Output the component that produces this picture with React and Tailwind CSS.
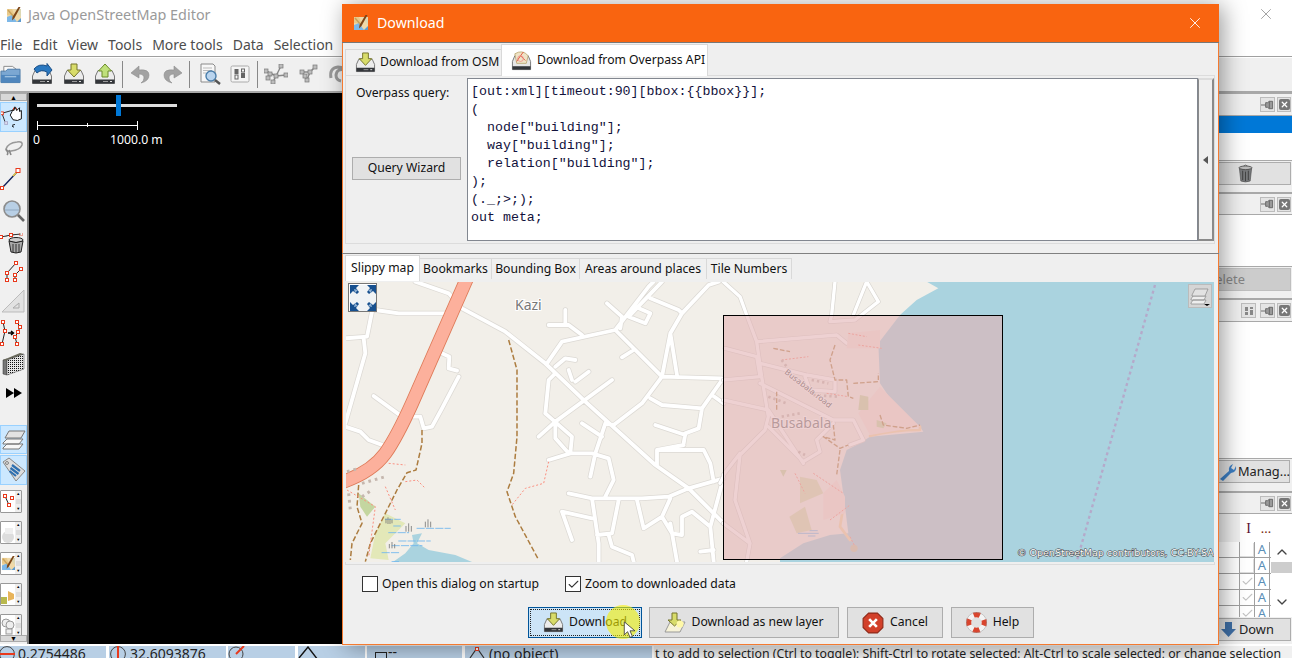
import { X, ChevronUp, ChevronDown, Check } from 'lucide-react'

const sans = "font-['Noto_Sans',sans-serif]"

function N({ x, y, o = 1 }) {
  return <rect x={x - 1.5} y={y - 1.5} width="3" height="3" fill="#fff" stroke="#e8391c" strokeWidth="1" opacity={o} />
}

function Logo({ className }) {
  return (
    <svg viewBox="0 0 16 16" className={className}>
      <rect x="1" y="2" width="14" height="13" fill="#f0d9a8" />
      <path d="M1 2 H6 L9 9 L1 8Z" fill="#e9c98a" />
      <path d="M1 10 L6 8 L11 15 H1Z" fill="#7db8e8" />
      <path d="M9 2 H15 V10Z" fill="#dcd8b4" />
      <path d="M11 15 L15 11 V15Z" fill="#5d9bd0" />
      <path d="M2 3 L8 10" stroke="#c8a25c" strokeWidth="1.5" />
      <path d="M14.5 0 L8.5 11 L6 13.5 L6.5 10 L12.5 0Z" fill="#7d4517" />
    </svg>
  )
}

function Drive({ arrow = 'down', className = 'w-5 h-5', color = '#d8dc6a' }) {
  return (
    <svg viewBox="0 0 22 22" className={className}>
      <path d="M1.5 13 L4 7.5 H18 L20.5 13 V20.5 H1.5Z" fill="#ececec" stroke="#777" />
      <rect x="1.5" y="16.5" width="19" height="4" fill="#33363a" />
      <rect x="9" y="18" width="5" height="1" fill="#999" />
      <rect x="16" y="18" width="2" height="1" fill="#ddd" />
      {arrow === 'down' && <path d="M8 1 H14 V7 H17.5 L11 14 L4.5 7 H8Z" fill={color} stroke="#75752a" />}
      {arrow === 'up' && <path d="M8 14 H14 V8 H17.5 L11 1 L4.5 8 H8Z" fill="#bfe07a" stroke="#6b8a2a" />}
      {arrow === 'blue' && <path d="M3 6 Q8 0 16 3 V0.5 L21 7 L16 13 V9 Q10 6 6 10Z" fill="#2a78c0" stroke="#1c4f86" />}
    </svg>
  )
}

function OverpassDrive() {
  return (
    <svg viewBox="0 0 22 22" className="w-[21px] h-[21px]">
      <path d="M1.5 12 L4 6 H18 L20.5 12 V20.5 H1.5Z" fill="#e6e6e6" stroke="#777" />
      <rect x="1.5" y="17" width="19" height="3.5" fill="#33363a" />
      <path d="M4 4 Q12 -1 18 6 L16 14 H6Z" fill="#efe3c6" stroke="#b7a36a" strokeWidth="0.8" />
      <path d="M6 12 L10 6 L15 11 M10 6 L13 2" stroke="#e4573c" strokeWidth="1" fill="none" />
      <circle cx="10" cy="9" r="3" fill="none" stroke="#e88" strokeWidth="0.8" />
    </svg>
  )
}

function Folder() {
  return (
    <svg viewBox="0 0 22 22" className="w-[21px] h-[22px] shrink-0">
      <path d="M4 3 H13 L17 6 V10 H4Z" fill="#fafafa" stroke="#888" />
      <path d="M1 8 H6 L8 6 H21 V20 H1Z" fill="#7ba7d2" stroke="#4d7aa6" />
      <path d="M1 12 H21 V20 H1Z" fill="#4f86bd" />
      <rect x="5" y="13" width="12" height="1.5" fill="#9cc0e0" />
    </svg>
  )
}

function Undo({ flip, className = '' }) {
  return (
    <svg viewBox="0 0 20 20" className={`w-5 h-5 shrink-0 ${flip ? '-scale-x-100' : ''} ${className}`}>
      <path d="M9 2 L1 9 L9 14 V10 Q14 10 14 14 Q14 17 11 19 Q19 17 19 11 Q19 5 9 6Z" fill="#a2a2a2" stroke="#8d8d8d" strokeWidth="0.6" />
    </svg>
  )
}

function Preview() {
  return (
    <svg viewBox="0 0 22 22" className="w-[22px] h-[22px] shrink-0 ml-[9px]">
      <path d="M2 1 H14 L16 3 V19 H2Z" fill="#f7f7f7" stroke="#8a8a8a" />
      <path d="M4 5 H13 M4 7.5 H13 M4 10 H7" stroke="#bbb" />
      <circle cx="12" cy="13" r="5" fill="#b9d4ee" stroke="#4b7eaa" strokeWidth="1.4" />
      <path d="M16 17 L21 21" stroke="#555" strokeWidth="2.4" />
    </svg>
  )
}

function Prefs() {
  return (
    <svg viewBox="0 0 20 20" className="w-5 h-5 shrink-0 ml-[9px]">
      <rect x="1" y="2" width="18" height="16" rx="1.5" fill="#f5f5f5" stroke="#aaa" />
      <rect x="4.5" y="5" width="4" height="5" fill="#666" />
      <rect x="5" y="11" width="3" height="4" fill="none" stroke="#666" />
      <rect x="11.5" y="5" width="3" height="3" fill="none" stroke="#666" />
      <rect x="11" y="9" width="4" height="5" fill="#666" />
    </svg>
  )
}

function GrayNodes({ variant, className }) {
  const nodes =
    variant === 1
      ? [[2, 7], [6, 10], [4, 14], [17, 2], [22, 11], [12, 12], [9, 18]]
      : [[4, 8], [12, 8], [17, 3], [9, 16], [7, 12]]
  return (
    <svg viewBox="0 0 24 20" className={`w-6 h-5 shrink-0 ${className}`}>
      {variant === 1 ? (
        <path d="M2 7 L12 12 L17 2 M5 9 L4 14 M12 12 L9 18 M12 12 L22 11" stroke="#888" strokeWidth="1.4" fill="none" />
      ) : (
        <path d="M4 8 L12 8 L17 3 M12 8 L9 16" stroke="#888" strokeWidth="1.4" fill="none" />
      )}
      {nodes.map(([x, y]) => (
        <rect key={`${x}-${y}`} x={x - 2} y={y - 2} width="4" height="4" fill="#bcbcbc" stroke="#777" strokeWidth="0.7" />
      ))}
    </svg>
  )
}

function Pin() {
  return (
    <div className="w-[15px] h-[15px] border border-[#bcbcbc] bg-[#e4e4e4] flex items-center justify-center">
      <svg viewBox="0 0 14 10" className="w-[14px] h-[10px]">
        <path d="M0 5 H5 M5 2.5 H7 L9 1 V9 L7 7.5 H5Z M9 1 H12.5 V9 H9" stroke="#666" fill="#9a9a9a" strokeWidth="1" />
      </svg>
    </div>
  )
}

function CloseBox() {
  return (
    <div className="w-[14px] h-[15px] border border-[#bcbcbc] bg-[#e4e4e4] flex items-center justify-center">
      <div className="w-[11px] h-[11px] bg-[#777] rounded-[2px] flex items-center justify-center">
        <X size={9} strokeWidth={3.4} color="#fff" />
      </div>
    </div>
  )
}

function PanelHeader({ h, extra }) {
  return (
    <div className={`${h} flex items-center justify-end gap-[2px] pr-[1px] bg-[#f0f0f0] border-y border-[#a9a9a9]`}>
      {extra && (
        <div className="w-[15px] h-[15px] border border-[#bcbcbc] bg-[#e4e4e4] mr-[2px] flex items-center justify-center">
          <svg viewBox="0 0 10 10" className="w-[10px] h-[10px]">
            <path d="M1 1 H4 V5 H1Z M6 1 H9 V3 H6Z M1 6 H4 V9 H1Z M6 4 H9 V9 H6Z" fill="#888" />
          </svg>
        </div>
      )}
      <Pin />
      <CloseBox />
    </div>
  )
}

function Trash() {
  return (
    <svg viewBox="0 0 16 20" className="w-[15px] h-[19px]">
      <path d="M6 2 Q8 0 10 2" stroke="#666" fill="none" />
      <ellipse cx="8" cy="4" rx="7" ry="2" fill="#bbb" stroke="#555" />
      <path d="M1.5 5 L3 18 Q8 20 13 18 L14.5 5 Q8 7 1.5 5Z" fill="#77797b" stroke="#444" strokeWidth="0.6" />
      <path d="M5 7 V17 M8 8 V18 M11 7 V17" stroke="#3f3f3f" />
    </svg>
  )
}

function LeftTool({ h, selected, children }) {
  return (
    <div className={`${h} w-[27px] flex items-center justify-center shrink-0 ${selected ? 'bg-[#cce8ff] border border-[#99d1ff]' : ''}`}>
      {children}
    </div>
  )
}

function ToggleIcon({ children, className }) {
  return (
    <div className={`h-[23px] w-[22px] shrink-0 bg-white border border-[#999] rounded-[1px] flex overflow-hidden ${className}`}>
      <div className="w-[15px] h-full overflow-hidden">{children}</div>
      <div className="w-[6px] h-full bg-[#eee] flex flex-col items-center justify-between text-[4px] leading-[6px] text-black">
        <span>▲</span>
        <span className="w-[5px] h-[5px] bg-[#ddd]" />
        <span>▼</span>
      </div>
    </div>
  )
}

function LeftToolbar() {
  return (
    <div className="w-[29px] shrink-0 bg-[#f0f0f0] border-r-2 border-[#808080] flex flex-col">
      <div className="h-[8px] w-[27px] bg-[#d8d8d8] border border-[#aaa] flex items-center justify-center text-[7px] leading-none text-black">▲</div>
      <LeftTool h="h-[30px] mt-[1px]" selected>
        <svg viewBox="0 0 27 30" className="w-[27px] h-[30px]">
          <path d="M1 11 L15 7 M1 11 L5 22" stroke="#222" />
          <N x={1} y={11} />
          <N x={15} y={7} />
          <rect x="4" y="20" width="3" height="3" fill="#dde" stroke="#aac" />
          <path d="M12 9 Q12 6 14 8 L15 4 L17 8 L20 5 V9 L22 8 V17 Q18 20 13 18 L10 13 Z" fill="#fff" stroke="#000" />
          <path d="M12 24 L15 23 M12 25 L14 26" stroke="#000" />
        </svg>
      </LeftTool>
      <LeftTool h="h-[18px] mt-[8px]">
        <svg viewBox="0 0 22 18" className="w-[22px] h-[18px]">
          <path d="M3 9 Q5 3 14 2 Q20 1 19 5 Q17 10 8 11 Q3 12 3 9Z" fill="none" stroke="#999" strokeWidth="1.6" />
          <path d="M3 9 Q6 13 4 15 M6 10 L8 15" stroke="#888" strokeWidth="1.6" fill="none" />
        </svg>
      </LeftTool>
      <LeftTool h="h-[24px] mt-[9px]">
        <svg viewBox="0 0 27 24" className="w-[27px] h-[24px]">
          <path d="M2 21 L18 4" stroke="#10205a" strokeWidth="1.4" />
          <path d="M13 9 L18 4" stroke="#e8c840" strokeWidth="1.4" />
          <rect x="16" y="1.5" width="4" height="4" fill="#fff" stroke="#e8391c" />
          <N x={2} y={21} />
        </svg>
      </LeftTool>
      <LeftTool h="h-[24px] mt-[8px]">
        <svg viewBox="0 0 24 24" className="w-6 h-6">
          <circle cx="10" cy="10" r="8" fill="#b8cfe5" stroke="#8c8c8c" strokeWidth="1.6" />
          <path d="M3 11 H17" stroke="#90a8c0" />
          <path d="M16 16 L22 22" stroke="#666" strokeWidth="2.6" />
        </svg>
      </LeftTool>
      <LeftTool h="h-[22px] mt-[10px]">
        <svg viewBox="0 0 27 22" className="w-[27px] h-[22px]">
          <path d="M1 4 L11 2 L21 1" stroke="#333" />
          <N x={1} y={4} />
          <N x={11} y={2} />
          <N x={21} y={1} o={0.4} />
          <ellipse cx="16" cy="7" rx="7" ry="2.5" fill="#ccc" stroke="#222" />
          <path d="M9 8 L11 19 Q16 21 21 19 L23 8 Q16 11 9 8Z" fill="#a9a9a9" stroke="#222" />
          <path d="M13 11 V19 M16 11 V20 M19 11 V19" stroke="#333" />
        </svg>
      </LeftTool>
      <LeftTool h="h-[22px] mt-[5px]">
        <svg viewBox="0 0 24 22" className="w-6 h-[22px]">
          <path d="M5 20 V13 L14 3 M13 20 V15 L19 9" stroke="#222" fill="none" />
          <N x={5} y={13} />
          <N x={5} y={20} />
          <N x={14} y={3} />
          <N x={13} y={15} />
          <N x={13} y={20} />
          <N x={19} y={9} />
        </svg>
      </LeftTool>
      <LeftTool h="h-[24px] mt-[7px]">
        <svg viewBox="0 0 24 24" className="w-6 h-6">
          <path d="M22 1 V23 H0Z" fill="#e2e2e2" stroke="#bbb" />
          <path d="M17 14 V19 H11Z" fill="none" stroke="#aaa" />
        </svg>
      </LeftTool>
      <LeftTool h="h-[26px] mt-[7px]">
        <svg viewBox="0 0 27 26" className="w-[27px] h-[26px]">
          <path d="M3 2 L5 11 L2 24 M17 2 L20 7 L18 12 L15 17 L17 24" stroke="#222" fill="none" />
          {[[3, 2], [5, 11], [2, 24], [17, 2], [20, 7], [18, 12], [15, 17], [17, 24]].map(([x, y]) => (
            <N key={`${x}-${y}`} x={x} y={y} />
          ))}
          <path d="M8 13 H13 M11 11 L13.5 13 L11 15" stroke="#000" strokeWidth="1.4" fill="none" />
        </svg>
      </LeftTool>
      <LeftTool h="h-[24px] mt-[6px]">
        <svg viewBox="0 0 24 24" className="w-6 h-6">
          <defs>
            <pattern id="dots" width="2" height="2" patternUnits="userSpaceOnUse">
              <rect width="1" height="1" fill="#111" />
            </pattern>
          </defs>
          <path d="M1 8 L5 7 L5 23 L1 22Z" fill="#777" stroke="#333" strokeWidth="0.5" />
          <path d="M1 8 L18 1 L22 2 L5 9Z" fill="#6a6a5c" />
          <path d="M5 8 L22 2 V17 L5 23Z" fill="#e6e6e6" stroke="#444" strokeWidth="0.5" />
          <path d="M5 8 L22 2 V17 L5 23Z" fill="url(#dots)" />
        </svg>
      </LeftTool>
      <div className="h-[12px] mt-[11px] w-[27px] shrink-0 flex items-center justify-center">
        <svg viewBox="0 0 16 10" className="w-4 h-[10px]"><path d="M0 0 L8 5 L0 10Z M8 0 L16 5 L8 10Z" fill="#000" /></svg>
      </div>
      <LeftTool h="h-[29px] mt-[26px]" selected>
        <svg viewBox="0 0 24 24" className="w-6 h-6">
          <path d="M1 20 L5 16 H21 L17 21 H1Z M1 15 L5 11 H21 L17 16 H1Z" fill="#f7f7f7" stroke="#777" />
          <path d="M3 10 L7 3 H23 L19 10Z" fill="#e2e2e2" stroke="#777" />
        </svg>
      </LeftTool>
      <LeftTool h="h-[30px] mt-[1px]" selected>
        <svg viewBox="0 0 24 26" className="w-6 h-[26px]">
          <path d="M1 5 L7 1 L23 14 L14 24Z" fill="#ddd" stroke="#888" />
          <circle cx="5" cy="6" r="1.4" fill="#fff" stroke="#777" />
          <path d="M10 8 L18 14 M8.5 11 L16.5 17 M7.5 14 L14 19" stroke="#2d6fb0" strokeWidth="2.2" />
        </svg>
      </LeftTool>
      <ToggleIcon className="mt-[5px]">
        <svg viewBox="0 0 15 21" className="w-[15px] h-[21px]">
          <path d="M4 5 L8 14" stroke="#222" />
          <N x={4} y={5} />
          <N x={11} y={7} />
          <N x={8} y={14} />
        </svg>
      </ToggleIcon>
      <ToggleIcon className="mt-[8px]">
        <svg viewBox="0 0 15 21" className="w-[15px] h-[21px]">
          <circle cx="7" cy="15" r="6" fill="#ddd" />
          <path d="M4 6 H12 V12 H4Z" fill="#eee" />
        </svg>
      </ToggleIcon>
      <ToggleIcon className="mt-[8px]">
        <Logo className="w-[15px] h-[21px]" />
      </ToggleIcon>
      <ToggleIcon className="mt-[8px]">
        <svg viewBox="0 0 15 21" className="w-[15px] h-[21px]">
          <path d="M7 7 L13 10 V15 L7 17Z" fill="#e8b45a" />
          <path d="M0 13 L6 13 L6 20 L0 20Z" fill="#b9b94e" />
        </svg>
      </ToggleIcon>
      <ToggleIcon className="mt-[8px]">
        <svg viewBox="0 0 15 21" className="w-[15px] h-[21px]">
          <circle cx="5" cy="8" r="4" fill="#eee" stroke="#999" />
          <circle cx="9" cy="10" r="4" fill="#eee" stroke="#999" />
          <rect x="5" y="14" width="6" height="5" fill="#eee" stroke="#999" />
        </svg>
      </ToggleIcon>
      <div className="h-[7px] -mt-[2px] w-[27px] shrink-0 bg-[#d8d8d8] border border-[#aaa] flex items-center justify-center text-[7px] leading-none text-black relative">▼</div>
    </div>
  )
}

function RightPanels() {
  const rows = [false, false, true, true, true]
  return (
    <div className={`w-[73px] shrink-0 bg-white flex flex-col text-[12.8px] text-[#222] ${sans}`}>
      <PanelHeader h="h-[23px]" />
      <div className="h-[17px] bg-[#0078d7]" />
      <div className="h-[27px] bg-white" />
      <div className="h-[33px] bg-[#f0f0f0] border-y border-[#a9a9a9] pt-[1px] pr-[1px]">
        <div className="h-[23px] bg-[#e1e1e1] border border-[#adadad] border-l-0 flex items-center pl-[19px]">
          <Trash />
        </div>
      </div>
      <PanelHeader h="h-[22px]" />
      <div className="h-[51px] bg-white" />
      <div className="h-[33px] bg-[#f0f0f0] border-y border-[#a9a9a9] pt-[1px] pr-[1px]">
        <div className="h-[23px] bg-[#cccccc] border border-[#bfbfbf] border-l-0 flex items-center text-[#838383] overflow-hidden">
          <span className="-ml-[13px]">Delete</span>
        </div>
      </div>
      <PanelHeader h="h-[23px]" extra />
      <div className="h-[136px] bg-white" />
      <div className="h-[34px] bg-[#f0f0f0] border-y border-[#a9a9a9] pt-[1px] pr-[2px]">
        <div className="h-[23px] bg-[#e1e1e1] border border-[#adadad] border-l-0 flex items-center gap-[1px]">
          <svg viewBox="0 0 18 18" className="w-[18px] h-[18px] shrink-0">
            <path d="M1 16 L10 8 Q9 3 14 1 L12 5 L15 7 L17 3 Q18 9 12 10 L4 18Z" fill="#3d7fc4" />
          </svg>
          <span>Manag...</span>
        </div>
      </div>
      <PanelHeader h="h-[22px]" />
      <div className="h-[28px] flex bg-white">
        <div className="w-[21px] bg-[#f0f0f0]" />
        <div className="w-[15px] ml-[1px] bg-white flex items-center justify-center font-['Liberation_Serif',serif] text-[#5a1030] text-[14px]">I</div>
        <div className="w-[14px] ml-[3px] flex items-center justify-center text-[#7a2a10] pt-[2px]">...</div>
      </div>
      <div className="h-[75px] flex overflow-hidden">
        <div className="w-[52px] shrink-0">
          {rows.map((checked, i) => (
            <div key={i} className="h-[16px] flex border-b border-[#a0a0a0] overflow-hidden">
              <div className="w-[21px] border-r border-[#a0a0a0] bg-white" />
              <div className="w-[15px] border-r border-[#a0a0a0] bg-white flex items-center justify-center">
                {checked ? <Check size={13} color="#c4c4c4" /> : <div className="w-[14px] h-[14px] bg-white border-b border-r border-[#ddd]" />}
              </div>
              <div className="w-[15px] border-r border-[#a0a0a0] bg-white text-[13px] leading-[15px] text-center text-[#5b8fb8]">A</div>
            </div>
          ))}
        </div>
        <div className="flex-1 flex flex-col items-center">
          <ChevronUp size={16} color="#444" className="mt-[2px]" />
          <div className="w-full h-[11px] mt-[2px] bg-[#cdcdcd]" />
          <ChevronDown size={16} color="#444" className="mt-[21px]" />
        </div>
      </div>
      <div className="h-[27px] bg-[#f0f0f0] pt-[1px] pr-[1px]">
        <div className="h-[23px] bg-[#e1e1e1] border border-[#adadad] border-l-0 flex items-center gap-[3px] pl-[2px]">
          <svg viewBox="0 0 15 16" className="w-[15px] h-[16px] shrink-0">
            <path d="M4 0 H11 V7 H15 L7.5 15 L0 7 H4Z" fill="#3f6fa6" />
          </svg>
          <span>Down</span>
        </div>
      </div>
    </div>
  )
}

function StatusBar() {
  return (
    <div className={`h-[12px] flex gap-[2px] overflow-hidden text-[14px] leading-[16px] text-[#222] ${sans}`}>
      <div className="w-[106px] bg-[#b8cfe5] flex gap-[3px] shrink-0">
        <svg viewBox="0 0 16 16" className="w-4 h-4 shrink-0 -ml-[1px]">
          <circle cx="8" cy="8" r="7.4" fill="none" stroke="#444" />
          <path d="M0 8 H16" stroke="#e8391c" strokeWidth="2" />
        </svg>
        <span>0.2754486</span>
      </div>
      <div className="w-[117px] ml-[1px] bg-[#b8cfe5] flex gap-[3px] shrink-0">
        <svg viewBox="0 0 18 16" className="w-[18px] h-4 shrink-0">
          <circle cx="9" cy="8" r="7.4" fill="none" stroke="#444" />
          <path d="M9 0 V16" stroke="#e8391c" strokeWidth="2" />
        </svg>
        <span>32.6093876</span>
      </div>
      <div className="w-[67px] bg-[#b8cfe5] shrink-0">
        <svg viewBox="0 0 18 16" className="w-[18px] h-4">
          <circle cx="8" cy="8" r="7" fill="none" stroke="#444" />
          <path d="M8 8 L16 0" stroke="#e8391c" strokeWidth="2" />
        </svg>
      </div>
      <div className="w-[67px] ml-[1px] bg-[#b8cfe5] shrink-0">
        <svg viewBox="0 0 24 16" className="w-6 h-4">
          <path d="M1 12 L10 1 L20 14" fill="none" stroke="#111" strokeWidth="1.4" />
        </svg>
      </div>
      <div className="w-[95px] bg-[#b8cfe5] shrink-0 flex items-start pl-[8px] gap-[1px]">
        <div className="w-[12px] h-[8px] mt-[6px] border border-[#222]" />
        <span className="leading-[12px]">--</span>
      </div>
      <div className="w-[187px] ml-[1px] bg-[#b8cfe5] flex gap-[3px] pl-[3px] shrink-0">
        <svg viewBox="0 0 18 16" className="w-[18px] h-4 shrink-0">
          <path d="M2 12 L9 2 L16 12" fill="none" stroke="#333" strokeWidth="1.2" />
          <N x={9} y={3} />
        </svg>
        <span>(no object)</span>
      </div>
      <div className="flex-1 whitespace-nowrap overflow-hidden bg-[#f0f0f0] text-[12.3px] pl-[1px]">
        t to add to selection (Ctrl to toggle); Shift-Ctrl to rotate selected; Alt-Ctrl to scale selected; or change selection
      </div>
    </div>
  )
}

function MapView() {
  const roads =
    'M220 5 L320 40 L360 85 L490 155 L610 250 L730 365 L940 555 L1040 625 L1145 730 M100 90 L170 100 L320 100 M90 95 L75 170 L10 175 M65 175 L70 220 L10 430 M10 440 L55 455 L80 480 L135 500 M95 348 L180 410 L235 410 L245 445 L270 440 L300 385 L350 290 M300 220 L322 230 L320 265 L345 272 M615 250 L660 185 L820 150 L960 290 L1140 295 M820 150 L920 20 L935 5 M960 290 L985 160 L1020 100 L1100 15 L1130 5 M985 160 L1005 285 M960 5 L860 110 L910 130 L925 100 L880 80 M925 55 L1010 90 L1020 100 M620 135 L680 135 L720 165 M670 90 L670 135 M795 70 L840 110 L835 145 M875 210 L840 232 M640 260 L670 235 L700 240 M610 400 L620 300 L640 280 M700 305 L740 275 M680 270 L690 300 M810 300 L640 425 L590 470 M610 400 L690 470 L685 520 L620 540 M640 430 L640 475 L680 520 L750 520 L800 535 L815 600 L790 650 M790 430 L760 520 L745 590 M720 430 L780 470 M960 290 L900 370 L815 435 L790 430 M925 355 L960 375 L1080 385 M1140 300 L1080 385 L1070 445 L1030 460 L1025 490 M1110 345 L1145 370 M940 435 L1030 465 M1025 495 L945 510 L945 555 M945 510 L1085 510 L1105 550 L1115 605 M1040 625 L1145 595 M1040 625 L980 650 L900 655 L750 655 L680 640 M750 655 L770 790 L770 845 M830 660 L810 760 L765 765 M800 765 L810 800 L870 825 L875 845 M885 660 L905 745 L960 710 L985 655 M960 710 L990 760 L1020 765 L1020 710 L1050 695 L1105 740 M985 730 L1005 845 M1140 610 L1105 740 L1115 845 M660 695 L750 715 M660 695 L690 780 M1075 815 L1115 810'
  const eastRoads =
    'M10 5 L60 50 L80 105 L110 185 L125 290 L145 410 L135 450 L60 525 L45 660 L90 790 L80 845 M110 185 L350 165 L380 190 M15 205 L110 230 L120 290 L10 300 M120 250 L260 285 L345 300 L345 335 L270 330 L255 290 M120 310 L260 380 L340 420 L400 420 L430 480 L390 495 M10 360 L145 390 L250 550 M145 440 L250 545 L300 515 L290 480 L340 430 M345 5 L335 105 L330 125 L405 120 L475 65 L440 5 L400 105 M10 590 L0 610 M10 730 L90 790 M60 520 L10 585'

  return (
    <svg viewBox="346 282 868 280" className="w-[868px] h-[280px] block bg-[#f2efe9]">
      <g transform="translate(342 280) scale(0.33333)" fill="none" strokeLinejoin="round" strokeLinecap="round">
        <path d={roads} stroke="#dcd9d4" strokeWidth="16" />
        <path d={roads} stroke="#fff" strokeWidth="11.5" />
        <path d="M130 700 L170 720 L190 730 L130 790 L140 840 L85 835 L100 760Z" fill="#e3e8b8" />
        <path d="M50 640 L100 680 L75 710 L55 680Z" fill="#c4d6a0" />
        <path d="M150 848 L190 820 L215 790 L210 765 L240 760 L225 790 L260 810 L340 825 L395 848Z" fill="#aad3df" />
        <path d="M375 -5 L210 370 Q165 470 130 520 Q90 575 5 605" stroke="#de7a58" strokeWidth="42" strokeLinecap="butt" />
        <path d="M375 -5 L210 370 Q165 470 130 520 Q90 575 5 605" stroke="#fcb09c" strokeWidth="37" strokeLinecap="butt" />
        <g stroke="#ac7c3f" strokeWidth="4.5" strokeDasharray="16 7" strokeLinecap="butt">
          <path d="M500 180 L525 270 L525 470 L515 580 L495 635 L520 710 L590 840" />
          <path d="M240 450 L240 490 L222 570 L195 578 L165 630 L130 700 L85 790 L70 845" />
          <path d="M50 615 L45 680 L60 730 L30 790 L25 840" />
        </g>
        <g stroke="#fa8f7f" strokeWidth="3" strokeDasharray="6 6" strokeLinecap="butt">
          <path d="M620 545 L605 610 L550 625 L510 675" />
          <path d="M140 550 L190 555 M190 605 L225 600 L250 625 M15 630 L100 680 L80 830 M130 620 L160 690" />
        </g>
        <g stroke="#c5b7ae" strokeWidth="9" strokeDasharray="8 12" strokeLinecap="butt">
          <path d="M15 575 L50 565 M20 640 L25 690 M60 610 L130 590 M60 650 L90 630" />
        </g>
        <g stroke="#6cb4ee" strokeWidth="2.5">
          <path d="M130 718 H175 M155 738 H175 M225 745 H325 M140 758 H200 M170 783 H265 M150 797 H240 M120 818 H175 M150 845 H170" strokeDasharray="22 6" />
        </g>
        <g stroke="#777" strokeWidth="2.5" strokeLinecap="butt">
          <path d="M132 730 V716 M138 732 V712 M144 732 V716 M150 730 V720 M192 755 V738 M200 755 V730 M208 755 V738 M250 742 V725 M258 742 V718 M266 742 V725 M142 805 V792 M150 805 V786 M158 805 V792" />
        </g>
      </g>
      <text x="515" y="310" fontFamily="Noto Sans, sans-serif" fontSize="14" fill="#777" stroke="#fff" strokeWidth="2" paintOrder="stroke">Kazi</text>

      <g transform="translate(720 280) scale(0.33333)">
        <path d="M620 5 L655 25 L590 60 L540 105 L475 190 L480 310 L520 370 L600 440 L610 455 L450 470 L420 490 L380 510 L360 570 L375 680 L385 760 L330 765 L250 790 L180 835 L180 850 L1500 850 L1500 -5 L620 -5Z" fill="#aad3df" />
        <g fill="none" strokeLinejoin="round" strokeLinecap="round">
          <path d={eastRoads} stroke="#d8d5d0" strokeWidth="14" />
          <path d={eastRoads} stroke="#fff" strokeWidth="10" />
          <path d="M1305 15 L1070 845" stroke="#b5a9ca" strokeWidth="7" strokeDasharray="9 9" strokeLinecap="butt" />
          <path d="M450 468 Q520 450 600 450 L600 440 M370 680 L360 740 L390 780" stroke="#f5d9a9" strokeWidth="8" />
          <circle cx="402" cy="805" r="11" fill="#ccc9a8" />
          <path d="M208 710 L255 680 L275 750 L230 760Z M240 590 L290 600 L310 640 L240 670Z" fill="#dadfb5" />
          <path d="M415 400 L480 320 L600 440 L450 465Z M385 160 L480 150 L480 205 L380 205Z M310 640 L350 600 L375 650 L375 700 L310 720Z" fill="#f5e3dc" />
          <g fill="#cbd7a5">
            <path d="M420 345 L445 350 L445 390 L415 390Z M470 420 L500 430 L490 445 L470 440Z M180 570 L200 570 L190 590Z" />
          </g>
          <g stroke="#ac7c3f" strokeWidth="4" strokeDasharray="14 6" strokeLinecap="butt" opacity="0.9">
            <path d="M345 195 L330 240 L345 300 L380 300 L385 350 L400 355 M400 310 L475 305 L475 280 M160 205 L210 215 M170 335 L170 390 M480 405 L490 435 L560 445 L600 435 M340 435 L345 480 L310 470 L360 505 L385 495 M360 510 L350 585" />
          </g>
          <g stroke="#fa8f7f" strokeWidth="3" strokeDasharray="6 5" strokeLinecap="butt">
            <path d="M385 160 L440 170 M415 195 L485 205 M185 240 L265 230 M320 340 L385 350 M225 580 L255 640 M280 580 L370 640 M330 720 L390 675 M390 770 L405 800" />
          </g>
          <g stroke="#c5b7ae" strokeWidth="8" strokeDasharray="7 9" strokeLinecap="butt">
            <path d="M275 300 L325 310 M280 345 L355 350 M145 350 L200 370 M185 410 L240 400 M185 240 L200 260 M235 515 L255 525" />
          </g>
          <path d="M235 760 H295 M270 752 H292 M265 768 H285" stroke="#6cb4ee" strokeWidth="2.5" />
        </g>
      </g>
      <text x="0" y="0" transform="translate(784 373) rotate(38)" fontFamily="DejaVu Sans, sans-serif" fontSize="8" fill="#555" stroke="#fff" strokeWidth="1.5" paintOrder="stroke">Busabala road</text>
      <text x="771" y="428" fontFamily="Noto Sans, sans-serif" fontSize="14" fill="#777" stroke="#fff" strokeWidth="2" paintOrder="stroke">Busabala</text>

      <rect x="723.5" y="315.5" width="279" height="244" fill="rgb(226,179,180)" fillOpacity="0.6" stroke="#000" />

      <text x="1017" y="556" fontFamily="DejaVu Sans, sans-serif" fontSize="9.5" fill="#fff" stroke="#444" strokeWidth="1" paintOrder="stroke">© OpenStreetMap contributors, CC-BY-SA</text>
    </svg>
  )
}

function ExpandButton() {
  return (
    <div className="absolute left-[2px] top-[1px] w-[29px] h-[29px] border border-[#777] bg-white p-[1px]">
      <svg viewBox="0 0 26 26" className="w-[26px] h-[26px]">
        <rect width="26" height="26" fill="#f0f3f5" />
        <path d="M0 0 H9 L6 3 L9 7 L7 9 L3 6 L0 9Z M26 0 H17 L20 3 L17 7 L19 9 L23 6 L26 9Z M0 26 H9 L6 23 L9 19 L7 17 L3 20 L0 17Z M26 26 H17 L20 23 L17 19 L19 17 L23 20 L26 17Z" fill="#17508f" />
        <path d="M4 4 L8 5 L5 8Z M22 4 L18 5 L21 8Z M4 22 L8 21 L5 18Z M22 22 L18 21 L21 18Z" fill="#8fb0d2" />
      </svg>
    </div>
  )
}

function LayersButton() {
  return (
    <div className="absolute right-[2px] top-[2px] w-[24px] h-[24px] border border-[#bbb] bg-[#d5d5d5] flex items-center justify-center">
      <svg viewBox="0 0 20 20" className="w-5 h-5">
        <path d="M1 17 L3 14 H16 L14 18 H1Z M1 13 L3 10 H16 L14 14 H1Z" fill="#eee" stroke="#888" strokeWidth="0.7" />
        <path d="M2 9 L5 3 H18 L15 10 H2Z" fill="#e2e2e2" stroke="#888" strokeWidth="0.7" />
        <path d="M14 18 H20 L17 20Z" fill="#000" />
      </svg>
    </div>
  )
}

function DialogButton({ w, icon, label, gap = 'gap-[5px]', focus }) {
  return (
    <div className={`${w} h-[31px] flex items-center justify-center ${gap} ${focus ? 'bg-[#cce4f7] border border-[#005499] outline-1 -outline-offset-3 outline-dotted outline-[#222]' : 'bg-[#e1e1e1] border border-[#adadad]'}`}>
      {icon}
      <span>{label}</span>
    </div>
  )
}

function Dialog() {
  const mapTabs = [
    ['Bookmarks', 'w-[72px]'],
    ['Bounding Box', 'w-[88px]'],
    ['Areas around places', 'w-[127px]'],
    ['Tile Numbers', 'w-[85px]'],
  ]
  return (
    <div className={`absolute left-[342px] top-[4px] w-[877px] h-[641px] flex flex-col shadow-[4px_2px_22px_rgba(0,0,0,0.4)] text-[12.2px] text-[#111] ${sans}`}>
      <div className="h-[38px] shrink-0 bg-[#f96410] flex items-center pl-[11px] pr-[15px] pb-[1px] text-white text-[14.2px]">
        <Logo className="w-[16px] h-[16px] mr-[8px]" />
        <span>Download</span>
        <X size={18} strokeWidth={1.2} color="#fff" className="ml-auto" />
      </div>
      <div className="flex-1 bg-[#efefef] border-x border-b border-[#f47a30] border-t-0 flex flex-col">
        <div className="h-px bg-[#777] -mx-px" />
        <div className="h-[32px] flex items-end pl-[2px] shrink-0">
          <div className="h-[26px] w-[156px] bg-[#f0f0f0] border-t border-l border-[#d9d9d9] flex items-center gap-[4px] pl-[9px]">
            <Drive className="w-[21px] h-[21px]" />
            <span className="whitespace-nowrap">Download from OSM</span>
          </div>
          <div className="h-[32px] w-[207px] bg-white border-x border-t border-[#d9d9d9] -mb-px flex items-center gap-[5px] pl-[9px] relative">
            <OverpassDrive />
            <span className="whitespace-nowrap">Download from Overpass API</span>
          </div>
        </div>
        <div className="h-[169px] ml-[2px] mr-[3px] shrink-0 border border-[#dcdcdc] flex bg-[#efefef]">
          <div className="w-[121px] shrink-0 flex flex-col pl-[6px]">
            <span className="pl-[4px] mt-[8px] leading-[17px]">Overpass query:</span>
            <div className="mt-[56px] w-[109px] h-[23px] bg-[#e1e1e1] border border-[#adadad] flex items-center justify-center">Query Wizard</div>
          </div>
          <pre className="w-[731px] h-[163px] mt-[2px] shrink-0 bg-white border border-[#828790] pl-[3px] pt-[4px] overflow-hidden font-['Liberation_Mono',monospace] text-[13.3px] leading-[18px] text-[#12123c]">
            {'[out:xml][timeout:90][bbox:{{bbox}}];\n(\n  node["building"];\n  way["building"];\n  relation["building"];\n);\n(._;>;);\nout meta;'}
          </pre>
          <div className="w-[16px] h-[163px] mt-[2px] border-r-2 border-b-2 border-[#8a8a8a] border-l border-t-2 border-t-[#dcdcdc] flex items-center justify-center">
            <svg viewBox="0 0 5 8" className="w-[5px] h-[8px]"><path d="M5 0 L0 4 L5 8Z" fill="#555" /></svg>
          </div>
        </div>
        <div className="h-[10px] shrink-0 border-b border-[#808080] -mx-px" />
        <div className="h-[28px] flex items-start pt-[1px] pl-[2px] shrink-0">
          <div className="h-[26px] w-[75px] bg-white border-x border-t border-[#d9d9d9] flex items-center justify-center pb-[1px]">Slippy map</div>
          {mapTabs.map(([label, w]) => (
            <div key={label} className={`h-[21px] mt-[3px] ${w} bg-[#f0f0f0] border-t border-r border-[#d9d9d9] flex items-center justify-center whitespace-nowrap`}>
              {label}
            </div>
          ))}
        </div>
        <div className="ml-[3px] w-[868px] h-[280px] relative shrink-0">
          <MapView />
          <ExpandButton />
          <LayersButton />
        </div>
        <div className="h-[3px] ml-[2px] mr-[3px] border-x border-b border-[#dcdcdc] shrink-0" />
        <div className="flex items-center h-[16px] mt-[11px] pl-[19px] shrink-0">
          <div className="w-[16px] h-[16px] bg-white border border-[#333]" />
          <span className="ml-[4px] w-[183px]">Open this dialog on startup</span>
          <div className="w-[16px] h-[16px] bg-white border border-[#333] flex items-center justify-center">
            <Check size={13} color="#333" strokeWidth={2} />
          </div>
          <span className="ml-[4px]">Zoom to downloaded data</span>
        </div>
        <div className="flex mt-[15px] pl-[185px] gap-[7px] shrink-0">
          <DialogButton w="w-[114px]" focus icon={<Drive className="w-[21px] h-[21px]" />} label="Download" />
          <DialogButton
            w="w-[190px]"
            icon={
              <svg viewBox="0 0 22 22" className="w-[22px] h-[22px]">
                <path d="M1 20 L6 10 H21 L16 20Z" fill="#f7f3d8" stroke="#999" />
                <path d="M8 1 H13 V8 H17 L10.5 14 L4 8 H8Z" fill="#d8dc6a" stroke="#75752a" />
                <circle cx="16" cy="12" r="3.5" fill="#fff9a8" />
              </svg>
            }
            label="Download as new layer"
          />
          <div className="ml-px">
            <DialogButton
              w="w-[96px]"
              gap="gap-[6px]"
              icon={
                <svg viewBox="0 0 20 20" className="w-[22px] h-[22px]">
                  <path d="M6 1 H14 L19 6 V14 L14 19 H6 L1 14 V6Z" fill="#d2402a" stroke="#8e2a1a" />
                  <path d="M6.5 6.5 L13.5 13.5 M13.5 6.5 L6.5 13.5" stroke="#fff" strokeWidth="2.4" />
                </svg>
              }
              label="Cancel"
            />
          </div>
          <div className="ml-px">
            <DialogButton
              w="w-[83px]"
              gap="gap-[6px]"
              icon={
                <svg viewBox="0 0 20 20" className="w-[21px] h-[21px]">
                  <circle cx="10" cy="10" r="7.5" fill="none" stroke="#f3f3f3" strokeWidth="5" />
                  <circle cx="10" cy="10" r="7.5" fill="none" stroke="#d9452e" strokeWidth="5" strokeDasharray="6 5.8" strokeDashoffset="3" />
                  <circle cx="10" cy="10" r="9.7" fill="none" stroke="#999" strokeWidth="0.5" />
                </svg>
              }
              label="Help"
            />
          </div>
        </div>
      </div>
    </div>
  )
}

function App() {
  return (
    <div className="relative w-[1292px] h-[658px] overflow-hidden bg-white flex flex-col">
      <div className={`h-[36px] shrink-0 flex items-center pl-[6px] pb-[6px] text-[14.4px] text-[#9a9a9a] ${sans}`}>
        <Logo className="w-[16px] h-[16px] mr-[6px]" />
        <span>Java OpenStreetMap Editor</span>
        <X size={18} strokeWidth={0.9} color="#777" className="absolute left-[1257px] top-[5px]" />
      </div>
      <div className={`h-[22px] shrink-0 flex gap-[10px] items-start border-b border-[#a0a0a0] -mt-[1px] mb-[1px] text-[14px] leading-[19px] text-[#4d4d4d] ${sans}`}>
        <span>File</span>
        <span>Edit</span>
        <span>View</span>
        <span>Tools</span>
        <span>More tools</span>
        <span>Data</span>
        <span>Selection</span>
      </div>
      <div className="h-[35px] shrink-0 bg-[#f0f0f0] border-b-2 border-[#a8a8a8] flex items-center pb-[1px] overflow-hidden">
        <Folder />
        <Drive arrow="blue" className="w-[22px] h-[22px] shrink-0 ml-[10px]" />
        <Drive className="w-[22px] h-[22px] shrink-0 ml-[10px]" />
        <Drive arrow="up" className="w-[22px] h-[22px] shrink-0 ml-[9px]" />
        <div className="w-px h-[27px] bg-[#888] ml-[6px] shrink-0" />
        <Undo className="ml-[7px]" />
        <Undo flip className="ml-[13px]" />
        <div className="w-px h-[27px] bg-[#888] ml-[6px] shrink-0" />
        <Preview />
        <Prefs />
        <div className="w-px h-[27px] bg-[#888] ml-[7px] shrink-0" />
        <GrayNodes variant={1} className="ml-[6px]" />
        <GrayNodes variant={2} className="ml-[10px]" />
        <svg viewBox="0 0 20 20" className="w-5 h-5 shrink-0 ml-[6px]">
          <path d="M3 14 Q1 4 10 3 Q17 3 18 9 M17 6 Q9 4 8 11 Q8 16 13 17" fill="none" stroke="#999" strokeWidth="3" />
        </svg>
      </div>
      <div className="h-[551px] shrink-0 flex">
        <LeftToolbar />
        <div className="flex-1 bg-black relative">
          <div className="absolute left-[8px] top-[11px] w-[140px] h-[3px] bg-[#dddddd]" />
          <div className="absolute left-[87px] top-[2px] w-[5px] h-[21px] bg-[#0078d7]" />
          <div className="absolute left-[8px] top-[32px] w-[101px] h-px bg-white" />
          <div className="absolute left-[8px] top-[28px] w-px h-[9px] bg-white" />
          <div className="absolute left-[58px] top-[30px] w-px h-[4px] bg-white" />
          <div className="absolute left-[108px] top-[28px] w-px h-[9px] bg-white" />
          <span className={`absolute left-[4px] top-[38px] text-white text-[12.2px] leading-[17px] ${sans}`}>0</span>
          <span className={`absolute left-[81px] top-[38px] text-white text-[12.2px] leading-[17px] ${sans}`}>1000.0 m</span>
        </div>
        <RightPanels />
      </div>
      <div className="h-[2px] shrink-0" />
      <StatusBar />
      <Dialog />
      <div className="absolute left-[606px] top-[605px] w-[34px] h-[34px] rounded-full bg-[#f5f000]/60" />
      <svg viewBox="0 0 16 22" className="absolute left-[623px] top-[621px] w-[14px] h-[18px]">
        <path d="M1 1 V17 L5 13 L8 20 L11 19 L8 12 H14Z" fill="#fff" stroke="#333" />
      </svg>
    </div>
  )
}

export default App
